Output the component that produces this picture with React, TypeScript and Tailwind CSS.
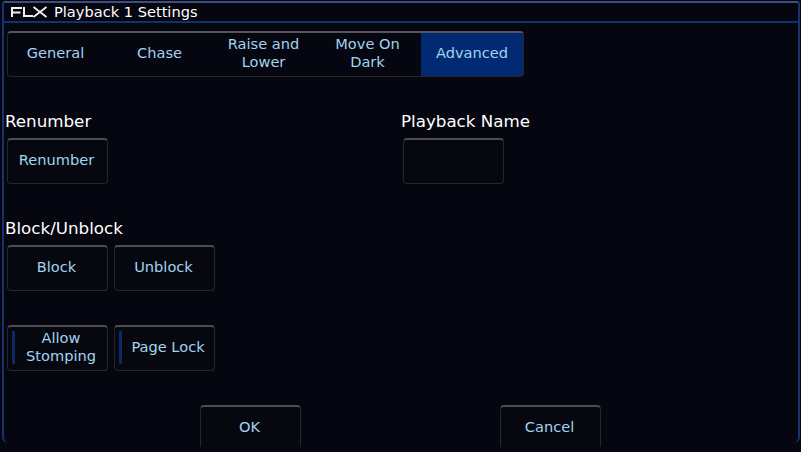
const font = { fontFamily: '"DejaVu Sans", sans-serif' };

const tabs = [
  { label: 'General', cls: 'w-[104px] pr-[9px]' },
  { label: 'Chase', cls: 'w-[104px] pr-[9px]' },
  { label: 'Raise and Lower', cls: 'w-[104px] pl-[4px] pr-[13px]' },
  { label: 'Move On Dark', cls: 'w-[101px] pl-[4px] pr-[10px]' },
];

function Logo() {
  return (
    <svg width="38" height="12" viewBox="0 0 38 12" fill="none" stroke="#f0f0f0" strokeWidth="2">
      <path d="M12 2H2V11M2 6.500H10.500" />
      <path d="M14 1V10H23" />
      <path d="M23.500 1L36.500 11M36.500 1L23.500 11" strokeWidth="1.800" />
    </svg>
  );
}

function Btn({ label, toggle, className = 'h-[46px]' }: { label?: string; toggle?: boolean; className?: string }) {
  return (
    <button className={`relative w-[101px] flex items-center justify-center rounded-[4px] border border-[#26272b] border-t-2 border-t-[#4d4e52] bg-[#07080f] pb-[3px] pr-[2px] text-[14.600px] leading-[18px] text-[#a0d4f0] ${className}`}>
      {toggle && <span className="absolute left-[4px] top-[4px] bottom-[6px] w-[3px] bg-[#0c2a66]" />}
      <span className={toggle ? 'pl-[9px] w-[90px]' : ''}>{label}</span>
    </button>
  );
}

function Heading({ children }: { children: string }) {
  return <div className="text-[16.700px] leading-[20px] text-white">{children}</div>;
}

export default function App() {
  return (
    <div className="w-[801px] h-[452px] bg-[#05060f] overflow-hidden pt-px pl-[2px] pr-[1px]" style={font}>
      <div className="h-[442px] rounded-[3px] border-x-2 border-[#16336f] border-t-2 border-t-[#3d4f7c] border-b-0 rounded-b-[6px]">
        <div className="h-[18px] flex items-center gap-[6px] border-b-2 border-[#12306c] box-content pl-[6px]">
          <Logo />
          <span className="text-[14.600px] leading-none text-white">Playback 1 Settings</span>
        </div>

        <div className="pl-[3px] pt-[8px]">
          <div className="w-[517px] h-[46px] flex rounded-[4px] border border-[#26272b] border-t-2 border-t-[#55565a] text-[14.600px] leading-[18px] text-[#a0d4f0]">
            {tabs.map((t) => (
              <div key={t.label} className={`${t.cls} flex items-center justify-center text-center pb-[3px]`}>
                {t.label}
              </div>
            ))}
            <div className="flex-1 flex items-center justify-center bg-[#022a72] rounded-r-[2px] pb-[3px]">Advanced</div>
          </div>

          <div className="flex mt-[34px] -ml-[2px]">
            <div className="w-[396px]">
              <Heading>Renumber</Heading>
              <div className="mt-[7px] ml-[2px]">
                <Btn label="Renumber" />
              </div>
            </div>
            <div>
              <Heading>Playback Name</Heading>
              <div className="mt-[7px] ml-[2px]">
                <Btn />
              </div>
            </div>
          </div>

          <div className="mt-[34px] -ml-[2px]">
            <Heading>Block/Unblock</Heading>
            <div className="mt-[7px] ml-[2px] flex gap-[6px]">
              <Btn label="Block" />
              <Btn label="Unblock" />
            </div>
          </div>

          <div className="mt-[34px] flex gap-[6px]">
            <Btn label="Allow Stomping" toggle />
            <Btn label="Page Lock" toggle />
          </div>

          <div className="mt-[34px] ml-[193px] flex gap-[199px]">
            <Btn label="OK" className="h-[42px] border-b-0 rounded-b-none pt-[3px]" />
            <Btn label="Cancel" className="h-[42px] border-b-0 rounded-b-none pt-[3px]" />
          </div>
        </div>
      </div>
    </div>
  );
}
